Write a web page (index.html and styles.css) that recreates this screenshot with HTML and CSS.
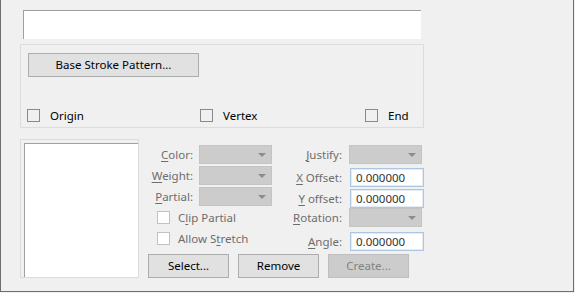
FILE: index.html
```html
<!DOCTYPE html>
<html lang="en">
<head>
<meta charset="UTF-8" />
<title>Stroke Pattern</title>
<link rel="stylesheet" href="styles.css">
</head>
<body>
<div class="dialog">
  <div class="path-field"></div>

  <div class="group">
    <button class="btn btn-wide">Base Stroke Pattern...</button>
    <div class="check-row">
      <label class="check"><span class="box"></span>Origin</label>
      <label class="check"><span class="box"></span>Vertex</label>
      <label class="check"><span class="box"></span>End</label>
    </div>
  </div>

  <div class="lower">
    <div class="list-frame"><div class="list"></div></div>

    <div class="props">
      <div class="fields">
        <!-- 左の列 -->
        <div class="col col-left">
          <div class="field"><span class="lbl"><u>C</u>olor:</span><span class="combo"></span></div>
          <div class="field"><span class="lbl"><u>W</u>eight:</span><span class="combo"></span></div>
          <div class="field"><span class="lbl"><u>P</u>artial:</span><span class="combo"></span></div>
          <label class="check check-off"><span class="box"></span>C<u>l</u>ip Partial</label>
          <label class="check check-off"><span class="box"></span>Allow S<u>t</u>retch</label>
        </div>
        <!-- 右の列 -->
        <div class="col col-right">
          <div class="field"><span class="lbl"><u>J</u>ustify:</span><span class="combo"></span></div>
          <div class="field f-x"><span class="lbl"><u>X</u> Offset:</span><span class="edit">0.000000</span></div>
          <div class="field f-y"><span class="lbl"><u>Y</u> offset:</span><span class="edit">0.000000</span></div>
          <div class="field f-rot"><span class="lbl"><u>R</u>otation:</span><span class="combo"></span></div>
          <div class="field f-angle"><span class="lbl"><u>A</u>ngle:</span><span class="edit">0.000000</span></div>
        </div>
      </div>
      <div class="buttons">
        <button class="btn">Select...</button>
        <button class="btn">Remove</button>
        <button class="btn" disabled>Create...</button>
      </div>
    </div>
  </div>
</div>
</body>
</html>
```

FILE: styles.css
```css
*, *::before, *::after {
  box-sizing: border-box;
}
body {
  margin: 0;
  background: #f0f0f0;
  font-family: 'Noto Sans', 'Liberation Sans', sans-serif;
  font-size: 11.5px;
  color: #000;
}
u {
  text-decoration: underline;
  text-underline-offset: 2px;
}

/* ウィンドウ枠 */
.dialog {
  width: 574px;
  height: 292px;
  border: 1px solid #6e6e6e;
  border-top: none;
  padding: 10px 0 0 19px;
}

.path-field {
  width: 398px;
  height: 29px;
  margin-left: 3px;
  background: #fff;
  border-top: 1px solid #a0a0a0;
  border-left: 1px solid #a0a0a0;
}

/* グループ */
.group {
  width: 404px;
  height: 84px;
  margin-top: 5px;
  border: 1px solid #dcdcdc;
  padding: 8px 0 0 7px;
}

/* ボタン */
.btn {
  display: block;
  width: 81px;
  height: 24px;
  padding: 0 0 1px;
  font: inherit;
  color: #000;
  background: #e1e1e1;
  border: 1px solid #adadad;
}
.btn:disabled {
  color: #838383;
  background: #cccccc;
  border-color: #bfbfbf;
}
.btn-wide {
  width: 171px;
}

/* チェックボックス */
.check-row {
  display: grid;
  grid-template-columns: 173px 165px auto;
  margin: 32px 0 0 -1px;
}
.check {
  display: flex;
  align-items: center;
  height: 13px;
  line-height: 13px;
}
.check .box {
  width: 13px;
  height: 13px;
  margin-right: 10px;
  border: 1px solid #8a8a8a;
  flex: none;
}
.check-off {
  height: 19px;
  margin-left: 9px;
  color: #6d6d6d;
}
.check-off .box {
  background: #fff;
  border-color: #c2c2c2;
  margin-right: 8px;
}

/* 下段 */
.lower {
  display: flex;
  margin-top: 11px;
}
.list-frame {
  width: 119px;
  height: 139px;
  border: 1px solid #dcdcdc;
  padding: 3px 0 0 3px;
  display: flex;
}
.list {
  flex: 1;
  background: #fff;
  border-top: 1px solid #a0a0a0;
  border-left: 1px solid #a0a0a0;
}

.props {
  margin-left: 9px;
  padding-top: 6px;
}
.fields {
  display: flex;
  height: 109px;
}
.col {
  display: flex;
  flex-direction: column;
  gap: 2px;
}
.col-right {
  gap: 0;
}
.field {
  display: flex;
  align-items: center;
  height: 19px;
}
.lbl {
  color: #6d6d6d;
  text-align: right;
  white-space: nowrap;
}
.col-left .lbl {
  width: 45px;
  margin-right: 6px;
}
.col-right .lbl {
  width: 70px;
  margin-right: 7px;
}
.f-x { margin-top: 4px; }
.f-y { margin-top: 2px; }
.f-angle { margin-top: 5px; }

.combo {
  position: relative;
  width: 73px;
  height: 19px;
  background: #cccccc;
  border: 1px solid #c4c4c4;
}
.combo::after {
  content: "";
  position: absolute;
  right: 5px;
  top: 7px;
  border-left: 4px solid transparent;
  border-right: 4px solid transparent;
  border-top: 4px solid #8c8c8c;
}
.edit {
  width: 74px;
  height: 19px;
  margin-left: 1px;
  padding-left: 5px;
  line-height: 17px;
  background: #fff;
  color: #333;
  border: 1px solid #adc7e2;
  box-shadow: inset 0 0 0 1px #e3ecf5;
}

.buttons {
  display: flex;
  gap: 9px;
}
```
